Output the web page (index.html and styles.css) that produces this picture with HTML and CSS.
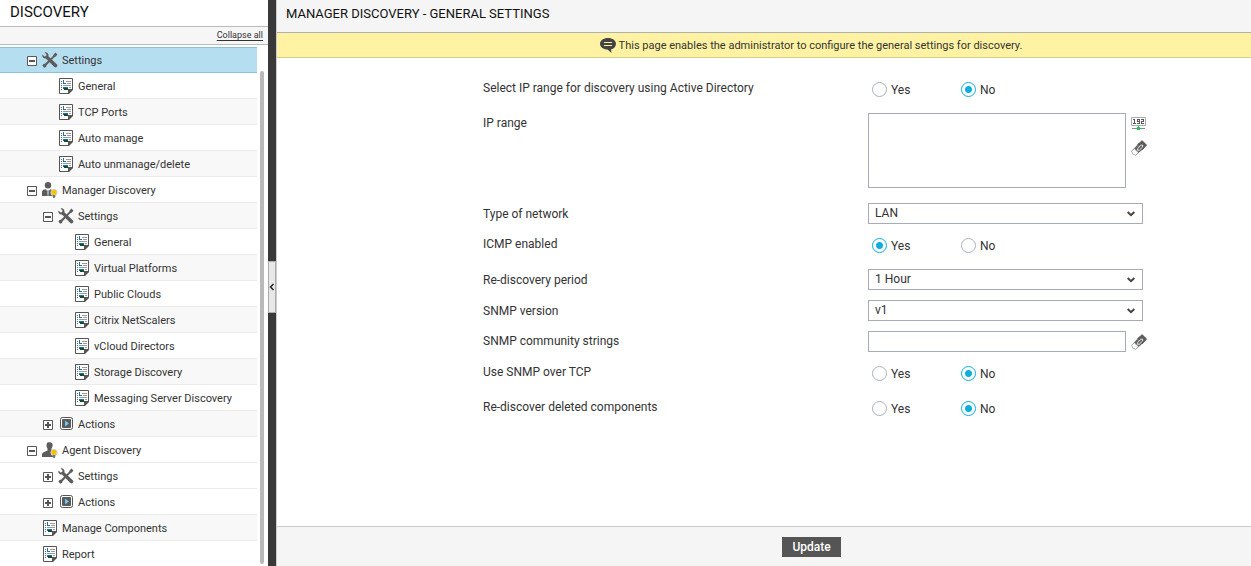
FILE: index.html
```
<!DOCTYPE html>
<html lang="en">
<head>
<meta charset="utf-8">
<title>Manager Discovery - General Settings</title>
<link rel="stylesheet" href="styles.css">
</head>
<body>
<svg class="sprite" aria-hidden="true">
  <symbol id="minus" viewBox="0 0 10 10"><path d="M.5.5h9v9h-9z" fill="#fff" stroke="#5a5a5a"/><path d="M2 4h6v2H2z" fill="#555"/></symbol>
  <symbol id="plus" viewBox="0 0 10 10"><path d="M.5.5h9v9h-9z" fill="#fff" stroke="#5a5a5a"/><path d="M2 4h6v2H2zM4 2h2v6H4z" fill="#555"/></symbol>
  <symbol id="tools" viewBox="0 0 16 16"><path d="M13.5.6 15.4 2.400l-1.500 2.200-1.600.7-7.700 7.900-.6 1.900L2.400 15.700.4 13.700l.8-1.500 2-.7L11 4l.8-1.800z" fill="#5c5c5c"/><path d="M2.600.4 4.500 2.400 4.200 4 2.500 4.500.5 2.500C-.2 4.800 1.400 7 3.900 6.500l8.200 8.300c1.800 1.700 4.500-.7 2.700-2.600L6.400 4.300C7 2 5.200-.2 2.600.4z" fill="#5c5c5c"/></symbol>
  <symbol id="doc" viewBox="0 0 16 16"><path d="M1.500.5h13v11l-4 4h-9z" fill="#fff" stroke="#555"/><path d="M10 16v-5h5v1l-4 4z" fill="#555"/><path d="M3 3h1v1H3zM3 5h1v1H3zM3 7h1v1H3zM3 9h1v1H3zM3 11h1v1H3z" fill="#666"/><path d="M5 2h1v3h2v1H5z" fill="#1871a8"/><path d="M8 3h5v1H8zM9 5h4v1H9zM5 7h8v1H5z" fill="#999"/><path d="M5 9h5v2H5z" fill="#1871a8"/><path d="M6 10h4v2H6z" fill="#164c2d"/><path d="M11 9h2v1h-2z" fill="#999"/></symbol>
  <symbol id="bulb" viewBox="0 0 16 16"><circle cx="12" cy="10.500" r="3.500" fill="#d2d2c8"/><path d="M12 7.800c-3.100 0-3 3-1.400 4.200v1h2.800v-1c1.600-1.200 1.700-4.200-1.400-4.200z" fill="#f5c400"/><path d="M10.700 13h2.600v2l-.7 1h-1.200l-.7-1z" fill="#777"/></symbol>
  <symbol id="manager" viewBox="0 0 16 16"><circle cx="6" cy="3.300" r="3.200" fill="#5c5c5c"/><path d="M0 14V9.500C.5 8 2 7.500 4 7.300l1.200 2V14zM6.800 14V9.300L8 7.300l2.500.8V14z" fill="#5c5c5c"/><path d="m6 8 1 1-.5 1L7 14H5l.5-4L5 9z" fill="#888"/><use href="#bulb"/></symbol>
  <symbol id="agent" viewBox="0 0 16 16"><path d="M5 1c1-1.200 5-1.200 5.500 1 .3 1.700-.2 3.500-1 4.600V8l2.500 1v6H0v-3c.5-2 3.500-2.500 5.500-3.500V6.600C4.500 5.500 4.200 2.500 5 1z" fill="#5c5c5c"/><use href="#bulb"/></symbol>
  <symbol id="play" viewBox="0 0 16 16"><rect x="2.500" y="1.500" width="12" height="12" rx="2" fill="#fff" stroke="#555"/><rect x="4" y="3" width="9" height="9" rx="1" fill="#5a5a5a"/><path d="m7 4.500 4 3-4 3z" fill="#70c7ef"/></symbol>
  <symbol id="eraser" viewBox="0 0 16 16"><path d="m6.500 4.700 4.700-4 4.300 4.400L11 10z" fill="#5b5b5b" stroke="#555"/><path d="m6.300 4.900-5.800 6.200 1 2.900 3.300 1.500L11 10z" fill="#666"/><path d="m3.200 8.800-2.400 2.500.7 2.400 3.100 1.500L7.300 12.500z" fill="#fff" stroke="#aaa" stroke-width=".7"/><path d="m6.700 8.500 3-3.300 2-.1-.1 1.900-3.200 3.200-1.800.2z" fill="#666" stroke="#fff" stroke-width=".8"/></symbol>
  <symbol id="ipaddr" viewBox="1 1 16 16"><path d="M1.500 1.500h14v8h-14z" fill="#fff" stroke="#aaa"/><path d="M3 3h2v4h1v1H3V7h1V4H3zM7 3h3v5H7V7h2V6H7zm1 1v1h1V4zM11 3h3v3h-2v1h2v1h-3V5h2V4h-2z" fill="#555"/><path d="M2 12h13v1H2z" fill="#8b8b8b"/><path d="M8 10h1v1h1v3H7v-3h1z" fill="#1fc85c"/></symbol>
</svg>

<div class="layout">
  <aside class="sidebar">
    <h1 class="sidebar-title">DISCOVERY</h1>
    <div class="sidebar-tools"><a href="#">Collapse all</a></div>
    <div class="tree-area">
      <ul class="tree">
        <li class="node selected"><button class="toggle" aria-label="Collapse"><svg><use href="#minus"/></svg></button><svg class="icon"><use href="#tools"/></svg><a href="#">Settings</a></li>
        <li class="node level-1"><span class="toggle"></span><svg class="icon"><use href="#doc"/></svg><a href="#">General</a></li>
        <li class="node level-1 shaded"><span class="toggle"></span><svg class="icon"><use href="#doc"/></svg><a href="#">TCP Ports</a></li>
        <li class="node level-1"><span class="toggle"></span><svg class="icon"><use href="#doc"/></svg><a href="#">Auto manage</a></li>
        <li class="node level-1 shaded"><span class="toggle"></span><svg class="icon"><use href="#doc"/></svg><a href="#">Auto unmanage/delete</a></li>
        <li class="node"><button class="toggle" aria-label="Collapse"><svg><use href="#minus"/></svg></button><svg class="icon"><use href="#manager"/></svg><a href="#">Manager Discovery</a></li>
        <li class="node level-1 shaded"><button class="toggle" aria-label="Collapse"><svg><use href="#minus"/></svg></button><svg class="icon"><use href="#tools"/></svg><a href="#">Settings</a></li>
        <li class="node level-2"><span class="toggle"></span><svg class="icon"><use href="#doc"/></svg><a href="#">General</a></li>
        <li class="node level-2 shaded"><span class="toggle"></span><svg class="icon"><use href="#doc"/></svg><a href="#">Virtual Platforms</a></li>
        <li class="node level-2"><span class="toggle"></span><svg class="icon"><use href="#doc"/></svg><a href="#">Public Clouds</a></li>
        <li class="node level-2 shaded"><span class="toggle"></span><svg class="icon"><use href="#doc"/></svg><a href="#">Citrix NetScalers</a></li>
        <li class="node level-2"><span class="toggle"></span><svg class="icon"><use href="#doc"/></svg><a href="#">vCloud Directors</a></li>
        <li class="node level-2 shaded"><span class="toggle"></span><svg class="icon"><use href="#doc"/></svg><a href="#">Storage Discovery</a></li>
        <li class="node level-2"><span class="toggle"></span><svg class="icon"><use href="#doc"/></svg><a href="#">Messaging Server Discovery</a></li>
        <li class="node level-1 shaded"><button class="toggle" aria-label="Expand"><svg><use href="#plus"/></svg></button><svg class="icon"><use href="#play"/></svg><a href="#">Actions</a></li>
        <li class="node"><button class="toggle" aria-label="Collapse"><svg><use href="#minus"/></svg></button><svg class="icon"><use href="#agent"/></svg><a href="#">Agent Discovery</a></li>
        <li class="node level-1"><button class="toggle" aria-label="Expand"><svg><use href="#plus"/></svg></button><svg class="icon"><use href="#tools"/></svg><a href="#">Settings</a></li>
        <li class="node level-1"><button class="toggle" aria-label="Expand"><svg><use href="#plus"/></svg></button><svg class="icon"><use href="#play"/></svg><a href="#">Actions</a></li>
        <li class="node shaded"><span class="toggle"></span><svg class="icon"><use href="#doc"/></svg><a href="#">Manage Components</a></li>
        <li class="node"><span class="toggle"></span><svg class="icon"><use href="#doc"/></svg><a href="#">Report</a></li>
      </ul>
      <div class="scroll-track"><div class="scroll-thumb"></div></div>
    </div>
  </aside>

  <div class="divider"><button class="handle" aria-label="Hide panel"><svg viewBox="0 0 6 8"><path d="M4.500 1 1.500 4l3 3" fill="none" stroke="#222" stroke-width="1.500"/></svg></button></div>

  <main class="main">
    <h2 class="main-title">MANAGER DISCOVERY - GENERAL SETTINGS</h2>
    <p class="notice"><svg viewBox="0 0 16 16"><path d="M8 1c4.400 0 8 2.400 8 5.800 0 2.900-2.200 5-5 5.700L11.500 16 7.500 12.600C3.300 12.500 0 10.200 0 6.800S3.600 1 8 1z" fill="#444"/><path d="M4 5h8v1H4zM4 8h8v1H4z" fill="#fff3a3"/></svg><span>This page enables the administrator to configure the general settings for discovery.</span></p>

    <form class="settings" id="settings">
      <div class="row choice" role="radiogroup" aria-labelledby="l-ad">
        <span class="label" id="l-ad">Select IP range for discovery using Active Directory</span>
        <div class="field"><label><input type="radio" name="ad">Yes</label><label><input type="radio" name="ad" checked>No</label></div>
      </div>
      <div class="row range">
        <label class="label" for="range">IP range</label>
        <div class="field"><textarea id="range"></textarea><div class="actions"><button type="button" aria-label="Add IP range"><svg><use href="#ipaddr"/></svg></button><button type="button" aria-label="Clear IP range"><svg><use href="#eraser"/></svg></button></div></div>
      </div>
      <div class="row pick">
        <label class="label" for="network">Type of network</label>
        <div class="field"><select id="network"><option>LAN</option></select></div>
      </div>
      <div class="row choice" role="radiogroup" aria-labelledby="l-icmp">
        <span class="label" id="l-icmp">ICMP enabled</span>
        <div class="field"><label><input type="radio" name="icmp" checked>Yes</label><label><input type="radio" name="icmp">No</label></div>
      </div>
      <div class="row pick">
        <label class="label" for="period">Re-discovery period</label>
        <div class="field"><select id="period"><option>1 Hour</option></select></div>
      </div>
      <div class="row pick">
        <label class="label" for="version">SNMP version</label>
        <div class="field"><select id="version"><option>v1</option></select></div>
      </div>
      <div class="row">
        <label class="label" for="community">SNMP community strings</label>
        <div class="field"><input class="text" type="text" id="community"><div class="actions"><button type="button" aria-label="Clear community strings"><svg><use href="#eraser"/></svg></button></div></div>
      </div>
      <div class="row choice" role="radiogroup" aria-labelledby="l-tcp">
        <span class="label" id="l-tcp">Use SNMP over TCP</span>
        <div class="field"><label><input type="radio" name="tcp">Yes</label><label><input type="radio" name="tcp" checked>No</label></div>
      </div>
      <div class="row choice" role="radiogroup" aria-labelledby="l-del">
        <span class="label" id="l-del">Re-discover deleted components</span>
        <div class="field"><label><input type="radio" name="del">Yes</label><label><input type="radio" name="del" checked>No</label></div>
      </div>
    </form>

    <footer class="footer"><button class="update" type="submit" form="settings">Update</button></footer>
  </main>
</div>
</body>
</html>
```
FILE: styles.css
```
* { box-sizing: border-box; }
body { margin: 0; font-family: Roboto, "Liberation Sans", sans-serif; font-size: 12px; color: #333; background: #fff; }
h1, h2, p, ul { margin: 0; padding: 0; font-weight: 400; }
button, input, select, textarea { font: inherit; color: inherit; margin: 0; }
button { padding: 0; border: 0; background: none; cursor: pointer; }
svg { display: block; }
.sprite { position: absolute; width: 0; height: 0; }

.layout { display: flex; height: 100vh; overflow: hidden; }

/* Navigation tree */
.sidebar { flex: none; width: 268px; display: flex; flex-direction: column; }
.sidebar-title { flex: none; padding: 0 10px 2px; font-size: 15px; line-height: 24px; color: #111; border-bottom: 1px solid #bbb; }
.sidebar-tools { flex: none; padding: 0 5px; text-align: right; font-size: 9px; line-height: 17px; background: #f6f6f6; border-bottom: 1px solid #bbb; }
.sidebar-tools a { color: #333; text-underline-offset: 2px; }
.tree-area { flex: 1; min-height: 0; display: flex; padding-top: 2px; }
.tree { flex: 1; list-style: none; overflow: hidden; }
.node { display: flex; align-items: center; height: 26px; padding-top: 1px; padding-left: 27px; border-bottom: 1px solid #ebebeb; font-size: 11px; line-height: 16px; }
.node.level-1 { padding-left: 43px; }
.node.level-2 { padding-left: 59px; }
.node.shaded { background: #f8f8f8; }
.node.selected { padding-top: 0; background: #b6def1; border-top: 1px solid #8fc0d8; border-bottom-color: #8fc0d8; }
.node a { padding-top: 2px; color: #333; text-decoration: none; }
.toggle, .toggle svg { flex: none; width: 10px; height: 10px; }
.toggle { margin-top: 2px; }
.icon { flex: none; width: 16px; height: 16px; margin: 0 4px 0 5px; }
.scroll-track { flex: none; width: 11px; padding: 24px 4px 2px 3px; }
.scroll-thumb { height: 100%; background: #b9b9b9; border-radius: 2px; }

/* Splitter */
.divider { flex: none; width: 9px; display: flex; align-items: center; padding-top: 8px; background: #393939; border-right: 1px solid #ccc; }
.handle { width: 8px; height: 52px; background: #e8e8e8; border: 1px solid #aaa; }
.handle svg { width: 6px; height: 8px; }

/* Content */
.main { flex: 1; min-width: 0; display: flex; flex-direction: column; }
.main-title { flex: none; padding: 0 9px 5px; font-size: 13px; line-height: 27px; color: #111; background: #f5f5f5; border-bottom: 1px solid #b0b0b0; }
.notice { flex: none; display: flex; align-items: center; justify-content: center; gap: 3px; height: 25px; padding-left: 94px; font-size: 11px; line-height: 22px; background: #fff3a3; border-bottom: 1px solid #d6cd8a; }
.notice svg { width: 16px; height: 16px; }
.notice span { padding-top: 2px; }
.settings { flex: 1; min-height: 0; display: flex; flex-direction: column; gap: 10px; padding-top: 20px; overflow: auto; }
.row { display: grid; grid-template-columns: 206fr 385fr 383fr; }
.label { grid-column: 2; line-height: 20px; }
.pick .label { padding-top: 1px; }
.field { grid-column: 3; display: flex; gap: 5px; }
.choice { min-height: 25px; }
.choice .field { padding: 4px 4px 0; gap: 0; }
.choice .field label { display: flex; gap: 4px; width: 89px; height: 15px; line-height: 16px; }
.range { margin-bottom: 5px; }
textarea, .text, select { border: 1px solid #a5acb8; border-radius: 0; background: #fff; outline: 0; }
textarea, .text { width: 258px; padding: 2px 6px; }
textarea { height: 75px; resize: none; }
.text { height: 21px; }
select {
  appearance: none; width: 275px; height: 21px; padding: 0 20px 2px 6px;
  background: #fff url("data:image/svg+xml,%3Csvg xmlns='http://www.w3.org/2000/svg' width='8' height='6'%3E%3Cpath d='M.7 1 4 4.200 7.300 1' fill='none' stroke='%23444' stroke-width='2'/%3E%3C/svg%3E") no-repeat right 7px center;
}
input[type="radio"] { appearance: none; flex: none; width: 15px; height: 15px; border: 1px solid #a9b1c0; border-radius: 50%; background: #fff; }
input[type="radio"]:checked { border-color: #0cafdb; background: radial-gradient(circle, #0cafdb 3px, #fff 4px); }
.actions { display: flex; flex-direction: column; gap: 7px; padding-top: 3px; }
.range .actions { padding-top: 4px; }
.actions svg { width: 16px; height: 16px; }

.footer { flex: none; display: flex; justify-content: center; padding: 10px 0 9px 95px; background: #f5f5f5; border-top: 1px solid #ccc; }
.update { width: 59px; height: 20px; color: #fff; background: #555; font-weight: 500; }
```
